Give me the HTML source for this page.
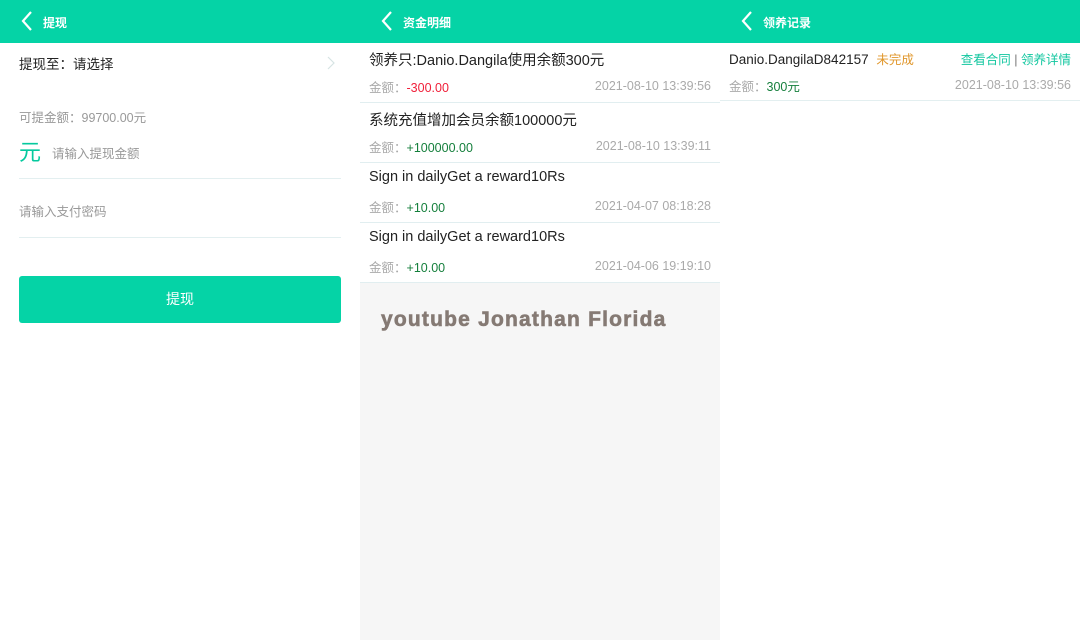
<!DOCTYPE html>
<html><head><meta charset="utf-8"><style>
*{margin:0;padding:0;box-sizing:border-box}
body{width:1080px;height:640px;overflow:hidden;font-family:"Liberation Sans","Noto Sans CJK SC",sans-serif;background:#fff;position:relative}
.p{position:absolute;top:0;width:360px;height:640px}
.hd{height:43px;background:#05d3a6;color:#fff;font-size:12px;font-weight:bold;position:relative}
.hd span{position:absolute;left:43px;top:14px}
.hd svg{position:absolute;left:20px;top:11px}
.abs{position:absolute;white-space:nowrap}
.line{position:absolute;height:1px;background:#e3eff0}
.it{position:absolute;left:0;width:360px;height:60px;border-bottom:1px solid #e1eef0;background:#fff}
.it .t{position:absolute;left:9px;top:6px;font-size:14.5px;color:#222}
.it .a{position:absolute;left:9px;top:34px;font-size:12.5px;color:#aaa}
.it .d{position:absolute;right:9px;top:36px;font-size:12.5px;color:#aaa}
.red{color:#f0203a}.grn{color:#157f3c}
</style></head><body>
<div class="p" style="left:0">
 <div class="hd"><svg width="14" height="20" viewBox="0 0 14 20"><path d="M11 1 L3 10 L11 19" stroke="#fff" stroke-width="2.2" fill="none"/></svg><span>提现</span></div>
 <div class="abs" style="left:19px;top:53px;font-size:13.5px;color:#222">提现至：请选择</div>
 <svg class="abs" style="left:327px;top:56px" width="9" height="14"><path d="M1 1 L7 7 L1 13" stroke="#d6e4e4" stroke-width="1.2" fill="none"/></svg>
 <div class="abs" style="left:19px;top:107px;font-size:12.5px;color:#999">可提金额：99700.00元</div>
 <div class="abs" style="left:19px;top:140px;font-size:22px;color:#05c99e;line-height:26px">元</div>
 <div class="abs" style="left:52px;top:143px;font-size:12.5px;color:#999">请输入提现金额</div>
 <div class="line" style="left:19px;top:178px;width:322px"></div>
 <div class="abs" style="left:19px;top:201px;font-size:12.5px;color:#999">请输入支付密码</div>
 <div class="line" style="left:19px;top:237px;width:322px"></div>
 <div class="abs" style="left:19px;top:276px;width:322px;height:47px;background:#05d3a6;border-radius:3px;color:#fff;font-size:14px;text-align:center;line-height:47px">提现</div>
</div>
<div class="p" style="left:360px;background:#f6f6f6">
 <div class="hd"><svg width="14" height="20" viewBox="0 0 14 20"><path d="M11 1 L3 10 L11 19" stroke="#fff" stroke-width="2.2" fill="none"/></svg><span>资金明细</span></div>
 <div class="it" style="top:43px"><div class="t">领养只:Danio.Dangila使用余额300元</div><div class="a">金额：<span class="red">-300.00</span></div><div class="d">2021-08-10 13:39:56</div></div>
 <div class="it" style="top:103px"><div class="t">系统充值增加会员余额100000元</div><div class="a">金额：<span class="grn">+100000.00</span></div><div class="d">2021-08-10 13:39:11</div></div>
 <div class="it" style="top:163px"><div class="t">Sign in dailyGet a reward10Rs</div><div class="a">金额：<span class="grn">+10.00</span></div><div class="d">2021-04-07 08:18:28</div></div>
 <div class="it" style="top:223px"><div class="t">Sign in dailyGet a reward10Rs</div><div class="a">金额：<span class="grn">+10.00</span></div><div class="d">2021-04-06 19:19:10</div></div>
 <div class="abs" style="left:21px;top:308px;font-size:21px;font-weight:bold;color:#857a74;letter-spacing:1.2px;-webkit-text-stroke:0.6px #857a74">youtube Jonathan Florida</div>
</div>
<div class="p" style="left:720px">
 <div class="hd"><svg width="14" height="20" viewBox="0 0 14 20"><path d="M11 1 L3 10 L11 19" stroke="#fff" stroke-width="2.2" fill="none"/></svg><span>领养记录</span></div>
 <div class="abs" style="left:9px;top:49px;font-size:13.5px;color:#222">Danio.DangilaD842157 <span style="color:#e0962a;font-size:12.5px;margin-left:4px">未完成</span></div>
 <div class="abs" style="right:9px;top:49px;font-size:12.5px;color:#13c7a0">查看合同 <span style="color:#777">|</span> 领养详情</div>
 <div class="abs" style="left:9px;top:76px;font-size:12.5px;color:#aaa">金额：<span class="grn">300元</span></div>
 <div class="abs" style="right:9px;top:78px;font-size:12.5px;color:#aaa">2021-08-10 13:39:56</div>
 <div class="line" style="left:0;top:100px;width:360px"></div>
</div>
</body></html>
